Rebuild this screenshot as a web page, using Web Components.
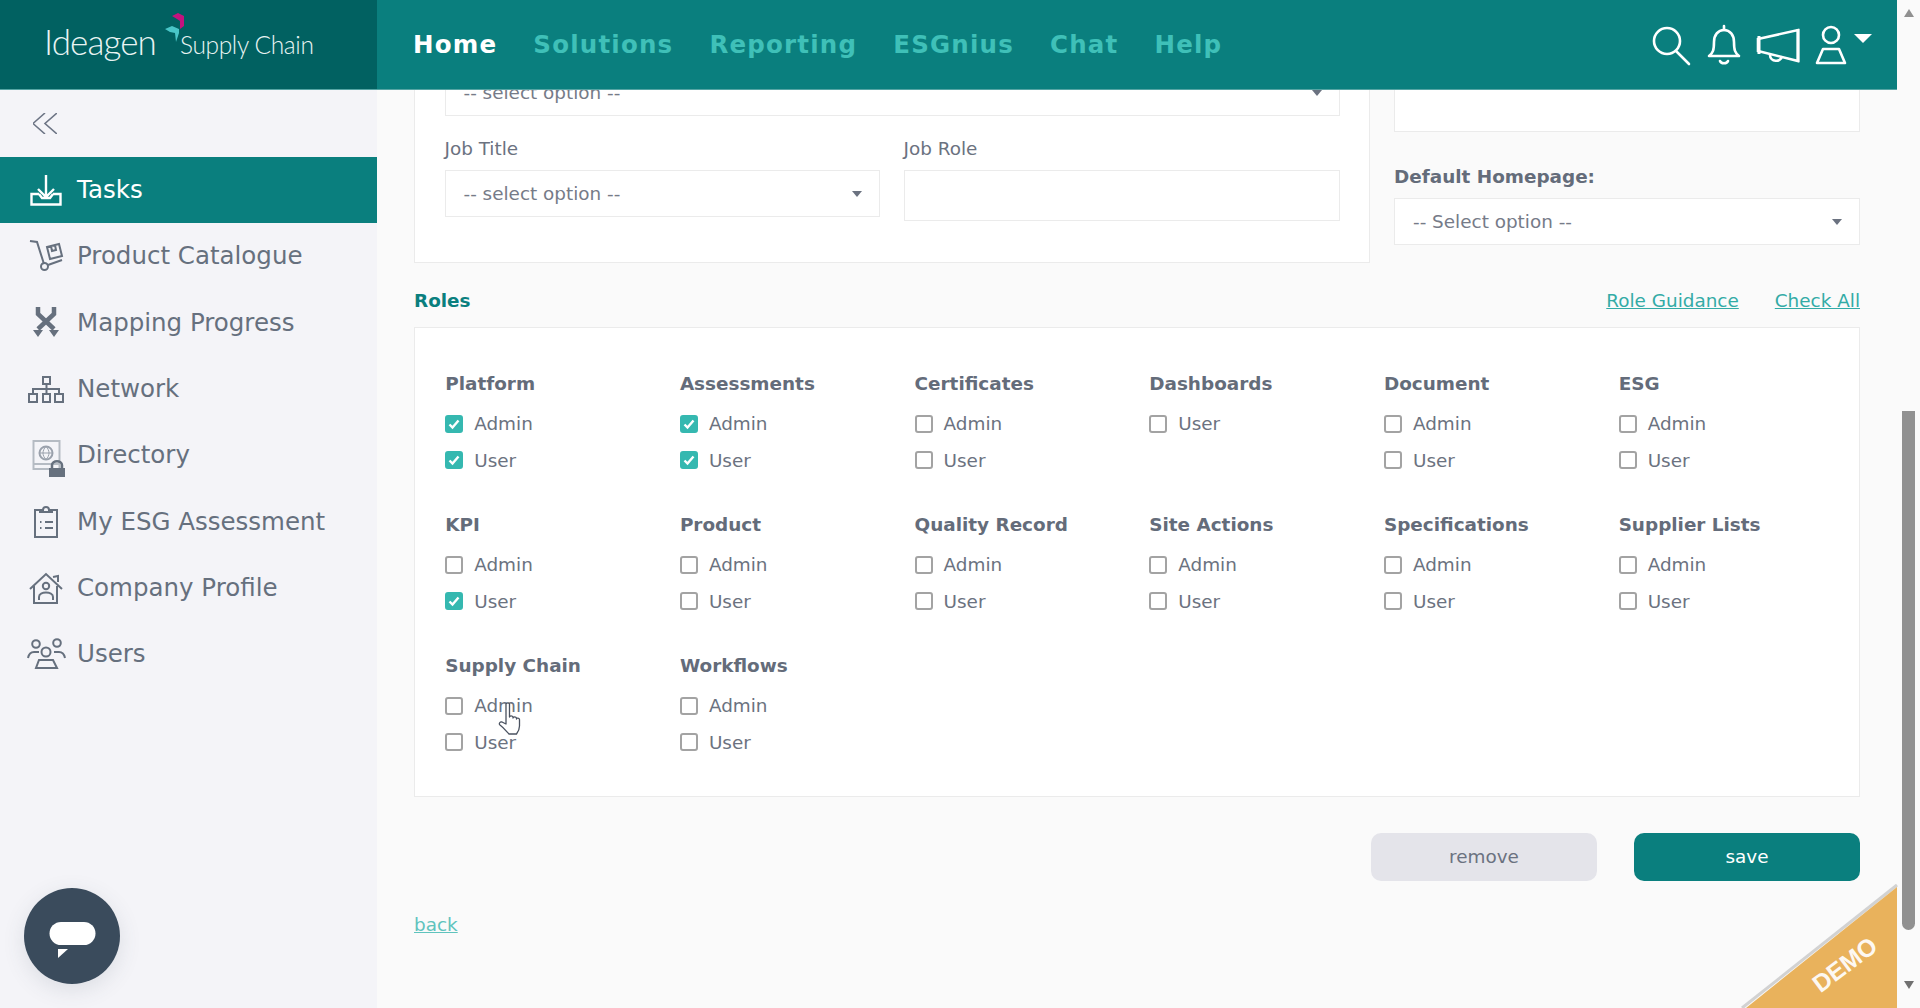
<!DOCTYPE html>
<html>
<head>
<meta charset="utf-8">
<style>
  html, body { margin: 0; height: 100%; overflow: hidden; background: #fafafa; }
  body { font-family: "DejaVu Sans", sans-serif; font-size: 18.4px; color: #6b7280; }
</style>
</head>
<body>
<app-shell>
  <top-bar slot="top"></top-bar>
  <side-nav slot="side">
    <nav-item icon="tasks" active>Tasks</nav-item>
    <nav-item icon="cart">Product Catalogue</nav-item>
    <nav-item icon="mapping">Mapping Progress</nav-item>
    <nav-item icon="network">Network</nav-item>
    <nav-item icon="directory">Directory</nav-item>
    <nav-item icon="clipboard">My ESG Assessment</nav-item>
    <nav-item icon="house">Company Profile</nav-item>
    <nav-item icon="users">Users</nav-item>
  </side-nav>
  <user-form slot="main"></user-form>
</app-shell>

<script>
// ################## small helper ##################
function shadowOf(el, html) {
    var shadow = el.attachShadow({mode: 'open'});
    shadow.innerHTML = html;
    return shadow;
}

class AppShell extends HTMLElement {
    constructor() {
        super();
        shadowOf(this, `
        <style>
          :host { display: grid; grid-template-columns: 1fr 23px; height: 1008px; position: relative; overflow: hidden; }
          .left { display: flex; flex-direction: column; min-width: 0; height: 1008px; }
          .body { display: flex; flex: 1; min-height: 0; }
          .main { flex: 1; min-width: 0; overflow: hidden; }
        </style>
        <div class="left">
          <slot name="top"></slot>
          <div class="body">
            <slot name="side"></slot>
            <div class="main"><slot name="main"></slot></div>
          </div>
        </div>
        <fake-scrollbar></fake-scrollbar>
        <demo-ribbon></demo-ribbon>
        <hand-cursor></hand-cursor>`);
    }
}

class TopBar extends HTMLElement {
    constructor() {
        super();
        shadowOf(this, `
        <style>
          :host { display: flex; height: 90px; background: #0a7f7e; box-shadow: inset 0 -1px 0 #55a5a4; flex: none; }
          .logo { width: 377px; background: #016161; box-shadow: inset 0 -1px 0 #55a5a4; display: flex; align-items: flex-start; position: relative; box-sizing: border-box; padding-left: 44px; color: #e9f4f3; font-family: Lato, sans-serif; font-weight: 300; }
          .brand { font-size: 35px; letter-spacing: -0.9px; line-height: 42px; margin-top: 20px; }
          .sub { font-size: 24.5px; letter-spacing: -0.35px; line-height: 30px; margin-top: 30px; margin-left: 24px; }
          .mark { position: absolute; left: 164px; top: 13px; }
          nav { display: flex; gap: 36px; padding-left: 36px; align-items: center; flex: 1; font-weight: 700; font-size: 24.5px; letter-spacing: 1.2px; color: #3fc0b8; padding-bottom: 1px; }
          nav .on { color: #fff; }
          .tools { display: flex; align-items: center; padding-right: 25px; gap: 14px; }
          svg { display: block; overflow: visible; }
          .tools svg { fill: none; stroke: #fff; stroke-width: 2.6; }
        </style>
        <div class="logo">
          <span class="brand">Ideagen</span><span class="sub">Supply Chain</span>
          <svg class="mark" width="24" height="30" viewBox="0 0 24 30">
            <path d="M8 3l6-3 6 3v10l-4 3v-8l-3-2z" fill="#c4127e"/>
            <path d="M1 16l7-3 7 3v4l-3 9-1-9-5-1z" fill="#49c6c8"/>
          </svg>
        </div>
        <nav><span class="on">Home</span><span>Solutions</span><span>Reporting</span><span>ESGnius</span><span>Chat</span><span>Help</span></nav>
        <div class="tools">
          <svg width="42" height="42" viewBox="0 0 42 42"><circle cx="17" cy="17" r="13"/><path d="M26 27l13 13" stroke-linecap="round"/></svg>
          <svg width="36" height="42" viewBox="0 0 36 42"><path d="M3 32c4-3 5-6 5-14 0-7 4-12 10-12s10 5 10 12c0 8 1 11 5 14z" stroke-linejoin="round"/><path d="M18 2v4M14 37c1 3 7 3 8 0" stroke-linecap="round"/></svg>
          <svg width="44" height="42" viewBox="0 0 44 42"><path d="M2 15l40-9v31L2 27z"/><path d="M42 5v33M3 12v18" stroke-width="3"/><path d="M14 31c0 7 11 8 12 1" /></svg>
          <span style="display:flex;align-items:flex-start;gap:6px">
            <svg width="34" height="40" viewBox="0 0 34 40"><circle cx="17" cy="10" r="8"/><path d="M9 24h16l6 14H3z" stroke-linejoin="round"/></svg>
            <svg width="18" height="9" viewBox="0 0 18 9" style="margin-top:9px;stroke:none"><path d="M0 0h18L9 9z" fill="#fff"/></svg>
          </span>
        </div>`);
    }
}

class SideNav extends HTMLElement {
    constructor() {
        super();
        shadowOf(this, `
        <style>
          :host { display: block; width: 377px; flex: none; background: #f4f4f8; position: relative; }
          .collapse { height: 67px; box-sizing: border-box; padding: 23px 0 0 33px; }
          svg { display: block; fill: none; stroke: #6d7585; stroke-width: 1.6; }
        </style>
        <div class="collapse">
          <svg width="24" height="21" viewBox="0 0 24 21"><path d="M12 0L0 10.5 12 21M24 0L12 10.5 24 21"/></svg>
        </div>
        <slot></slot>
        <chat-button></chat-button>`);
    }
}

// path data for the sidebar icons, drawn on a 40x40 box
const NAV_ICONS = {
    tasks: '<path d="M20 5v22M12 19l8 8 8-8M13 24H5.500v10.500h29V24H27M13 24l3 4h8l3-4"/>',
    cart: '<path d="M4 5l7 1 7 22"/><circle cx="18.500" cy="30.500" r="3.500"/><path d="M22 29l14-5"/><path d="M21 11l12-3 3 12-12 3zM25 10l1 5 4-1-1-5"/>',
    mapping: '<path d="M12 4v7l16 15M28 4v7L12 26" stroke-width="4.500"/><path d="M7 27h10l-5 7zM23 27h10l-5 7z" fill="#66707e" stroke="none"/>',
    network: '<path d="M17 8h7v7h-7zM3 25h8v8H3zM17 25h7v8h-7zM29 25h8v8h-8zM20.500 15v10M7 25v-5h26v5"/>',
    directory: '<path d="M7.500 6h26v28h-26z" stroke="#b5bbc3"/><path d="M7.500 29h26" stroke="#b5bbc3"/><circle cx="20" cy="18" r="6.500" stroke="#9aa1ac"/><path d="M13.500 18h13M20 11.500c-4 4-4 9 0 13M20 11.500c4 4 4 9 0 13" stroke="#9aa1ac" stroke-width="1"/><path d="M23 33h16v9H23z" fill="#66707e" stroke="none"/><path d="M26 33v-3c0-5 10-5 10 0v3" stroke-width="2.500"/>',
    clipboard: '<path d="M14 8H9v27h22V8h-5"/><path d="M14 10V8h3c0-4 6-4 6 0h3v2z"/><path d="M14 20h1.500M14 26h1.500M19 20h8M19 26h8"/>',
    house: '<path d="M4 21L20 6l16 15M8 18v17h23V18M27 9l5-1v6"/><circle cx="20" cy="18" r="3.200"/><path d="M13 32v-3c0-6 14-6 14 0v3"/>',
    users: '<circle cx="10" cy="10" r="3.800"/><circle cx="31" cy="9" r="3.800"/><circle cx="20" cy="18" r="4.500"/><path d="M2 24c1-5 3-6 6-6h5M39 24c-1-5-3-6-6-6h-5M13 26h14l4 8H10z"/>'
};

class NavItem extends HTMLElement {
    constructor() {
        super();
        let icon = NAV_ICONS[this.getAttribute('icon')] || '';
        shadowOf(this, `
        <style>
          :host { display: flex; align-items: center; gap: 11px; height: 66.300px; padding-left: 26px; font-size: 24.500px; color: #66707e; }
          :host([active]) { background: #0a7f7e; color: #fff; }
          svg { flex: none; overflow: visible; fill: none; stroke: #66707e; stroke-width: 2; }
          :host([active]) svg { stroke: #fff; stroke-width: 2.400; }
          span { padding-bottom: 1px; }
        </style>
        <svg width="40" height="40" viewBox="0 0 40 40">${icon}</svg>
        <span><slot></slot></span>`);
    }
}

class ChatButton extends HTMLElement {
    constructor() {
        super();
        shadowOf(this, `
        <style>
          :host { display: block; position: absolute; left: 24px; top: 798px; width: 96px; height: 96px; border-radius: 50%; background: #3a4b5c; box-shadow: 0 6px 22px rgba(60,80,90,.13); }
          svg { display: block; }
        </style>
        <svg width="96" height="96" viewBox="0 0 96 96">
          <rect x="25.500" y="34" width="46" height="23" rx="11.500" fill="#fff"/>
          <path d="M34 61h10l-10 9z" fill="#fff"/>
        </svg>`);
    }
}

class FormSelect extends HTMLElement {
    constructor() {
        super();
        shadowOf(this, `
        <style>
          :host { display: flex; align-items: center; justify-content: space-between; box-sizing: border-box; height: 47px; padding: 0 17px 0 18px; background: #fff; border: 1.500px solid #ebebeb; color: #767b88; }
          i { width: 0; height: 0; border: 5px solid transparent; border-top: 6px solid #6b7280; border-bottom: 0; }
        </style>
        <span><slot></slot></span><i></i>`);
    }
}

class FormInput extends HTMLElement {
    constructor() {
        super();
        shadowOf(this, `
        <style>
          :host { display: block; box-sizing: border-box; height: 51px; background: #fff; border: 1.500px solid #ebebeb; }
        </style>`);
    }
}

class RoleOption extends HTMLElement {
    constructor() {
        super();
        shadowOf(this, `
        <style>
          :host { display: flex; align-items: center; gap: 11px; height: 36.400px; color: #6b7280; }
          .box { width: 18px; height: 18px; box-sizing: border-box; border: 2px solid #a3a3a3; border-radius: 3px; background: #fff; flex: none; }
          :host([checked]) .box { background: #35b8b0; border-color: #35b8b0; }
          svg { display: none; }
          :host([checked]) svg { display: block; margin: -2px; }
        </style>
        <div class="box"><svg width="18" height="18" viewBox="0 0 18 18"><path d="M4.500 9.500l3 3 6-7" fill="none" stroke="#fff" stroke-width="2.400"/></svg></div>
        <span><slot></slot></span>`);
    }
}

class RoleGroup extends HTMLElement {
    constructor() {
        super();
        // attribute: name, plus "admin,user" list of options and which are on
        let opts = (this.getAttribute('options') || 'Admin,User').split(',');
        let on = (this.getAttribute('on') || '').split(',');
        let html_str = '';
        for (let i in opts) {
            html_str += '<role-option ' + (on.includes(opts[i]) ? 'checked' : '') + '>' + opts[i] + '</role-option>';
        }
        shadowOf(this, `
        <style>
          :host { display: block; height: 136px; }
          h4 { margin: 0 0 10.500px; font-size: 18.400px; line-height: 22px; font-weight: 700; color: #646c7a; }
        </style>
        <h4>${this.getAttribute('name')}</h4>
        ${html_str}`);
    }
}

class RolesCard extends HTMLElement {
    constructor() {
        super();
        const groups = [
            ['Platform', 'Admin,User', 'Admin,User'], ['Assessments', 'Admin,User', 'Admin,User'],
            ['Certificates', 'Admin,User', ''], ['Dashboards', 'User', ''],
            ['Document', 'Admin,User', ''], ['ESG', 'Admin,User', ''],
            ['KPI', 'Admin,User', 'User'], ['Product', 'Admin,User', ''],
            ['Quality Record', 'Admin,User', ''], ['Site Actions', 'Admin,User', ''],
            ['Specifications', 'Admin,User', ''], ['Supplier Lists', 'Admin,User', ''],
            ['Supply Chain', 'Admin,User', ''], ['Workflows', 'Admin,User', '']
        ];
        let html_str = '';
        for (let g of groups) {
            html_str += `<role-group name="${g[0]}" options="${g[1]}" on="${g[2]}"></role-group>`;
        }
        shadowOf(this, `
        <style>
          :host { display: grid; grid-template-columns: repeat(6, 234.700px); box-sizing: border-box; height: 470px; padding: 45px 0 0 30.200px; background: #fff; border: 1.500px solid #ebebeb; }
        </style>
        ${html_str}`);
    }
}

class UserForm extends HTMLElement {
    constructor() {
        super();
        shadowOf(this, `
        <style>
          :host { display: block; margin-top: -60px; padding: 0 37px; }
          .top { display: grid; grid-template-columns: 956px 466px; gap: 24px; align-items: start; }
          .card { box-sizing: border-box; height: 233px; padding: 38px 29.500px 0; background: #fff; border: 1.500px solid #ebebeb; }
          .pair { display: grid; grid-template-columns: 435px 436px; gap: 24px; margin-top: 22px; align-items: start; }
          .right { padding-top: 51px; }
          label { display: block; line-height: 22px; margin-bottom: 10px; }
          label.b { font-weight: 700; margin-top: 34px; color: #646c7a; }
          .roles-head { display: flex; align-items: center; gap: 36px; margin: 27px 0 15px; line-height: 22px; }
          .roles-head b { flex: 1; color: #0a7f7e; }
          a { color: #33aba6; text-decoration: underline; }
          .actions { display: flex; justify-content: flex-end; gap: 37px; margin-top: 36px; }
          .btn { display: flex; align-items: center; justify-content: center; width: 226px; height: 47.500px; border-radius: 10px; background: #e4e4ea; color: #6b7280; }
          .btn.save { background: #0a7f7e; color: #fff; }
          .back { margin-top: 33px; line-height: 22px; }
          .back a { color: #5fc3bd; }
        </style>
        <div class="top">
          <div class="card">
            <form-select>-- select option --</form-select>
            <div class="pair">
              <div><label>Job Title</label><form-select>-- select option --</form-select></div>
              <div><label>Job Role</label><form-input></form-input></div>
            </div>
          </div>
          <div class="right">
            <form-input></form-input>
            <label class="b">Default Homepage:</label>
            <form-select>-- Select option --</form-select>
          </div>
        </div>
        <div class="roles-head"><b>Roles</b><a>Role Guidance</a><a>Check All</a></div>
        <roles-card></roles-card>
        <div class="actions"><div class="btn">remove</div><div class="btn save">save</div></div>
        <div class="back"><a>back</a></div>`);
    }
}

class FakeScrollbar extends HTMLElement {
    constructor() {
        super();
        shadowOf(this, `
        <style>
          :host { display: flex; flex-direction: column; align-items: center; height: 1008px; background: #fafafa; }
          .up { width: 0; height: 0; margin-top: 9px; border: 5.500px solid transparent; border-bottom: 8px solid #909090; border-top: 0; }
          .gap { height: 394px; }
          .thumb { width: 13px; height: 519px; border-radius: 0 0 7px 7px; background: #919191; }
          .down { width: 0; height: 0; margin-top: 51px; border: 5.500px solid transparent; border-top: 8px solid #707070; border-bottom: 0; }
        </style>
        <div class="up"></div><div class="gap"></div><div class="thumb"></div><div class="down"></div>`);
    }
}

class DemoRibbon extends HTMLElement {
    constructor() {
        super();
        shadowOf(this, `
        <style>
          :host { display: block; position: absolute; left: 1740px; top: 880px; width: 157px; height: 128px; }
          svg { display: block; overflow: visible; }
          span { position: absolute; left: 105px; top: 85px; transform: translate(-50%,-50%) rotate(-37deg); font: 700 24.500px "Liberation Sans", sans-serif; color: #fff; opacity: .92; }
        </style>
        <svg width="157" height="128" viewBox="0 0 157 128">
          <path d="M2 128L157 5" stroke="#888" stroke-width="3" opacity=".35" fill="none"/>
          <path d="M6 128L157 7v121z" fill="#e9b25c"/>
        </svg>
        <span>DEMO</span>`);
    }
}

class HandCursor extends HTMLElement {
    constructor() {
        super();
        shadowOf(this, `
        <style>
          :host { display: block; position: absolute; left: 496px; top: 702px; width: 30px; height: 34px; }
          svg { display: block; }
        </style>
        <svg width="30" height="34" viewBox="0 0 30 34">
          <path d="M10 2c1-1.500 3-1.500 3.500 0v13c0-1.500 3-1.500 3.500 0v1c0-1.500 3-1.500 3.500 0v1c0-1.500 3-1 3 .500V24c0 4-1.500 6-3 8H13c-2-2-5-6-9-9-1.500-1.500 0-3.500 2-3l4 2z" fill="#fff" stroke="#4a5260" stroke-width="1.300" stroke-linejoin="round"/>
        </svg>`);
    }
}

customElements.define('app-shell', AppShell);
customElements.define('top-bar', TopBar);
customElements.define('side-nav', SideNav);
customElements.define('nav-item', NavItem);
customElements.define('chat-button', ChatButton);
customElements.define('form-select', FormSelect);
customElements.define('form-input', FormInput);
customElements.define('role-option', RoleOption);
customElements.define('role-group', RoleGroup);
customElements.define('roles-card', RolesCard);
customElements.define('user-form', UserForm);
customElements.define('fake-scrollbar', FakeScrollbar);
customElements.define('demo-ribbon', DemoRibbon);
customElements.define('hand-cursor', HandCursor);
</script>
</body>
</html>
